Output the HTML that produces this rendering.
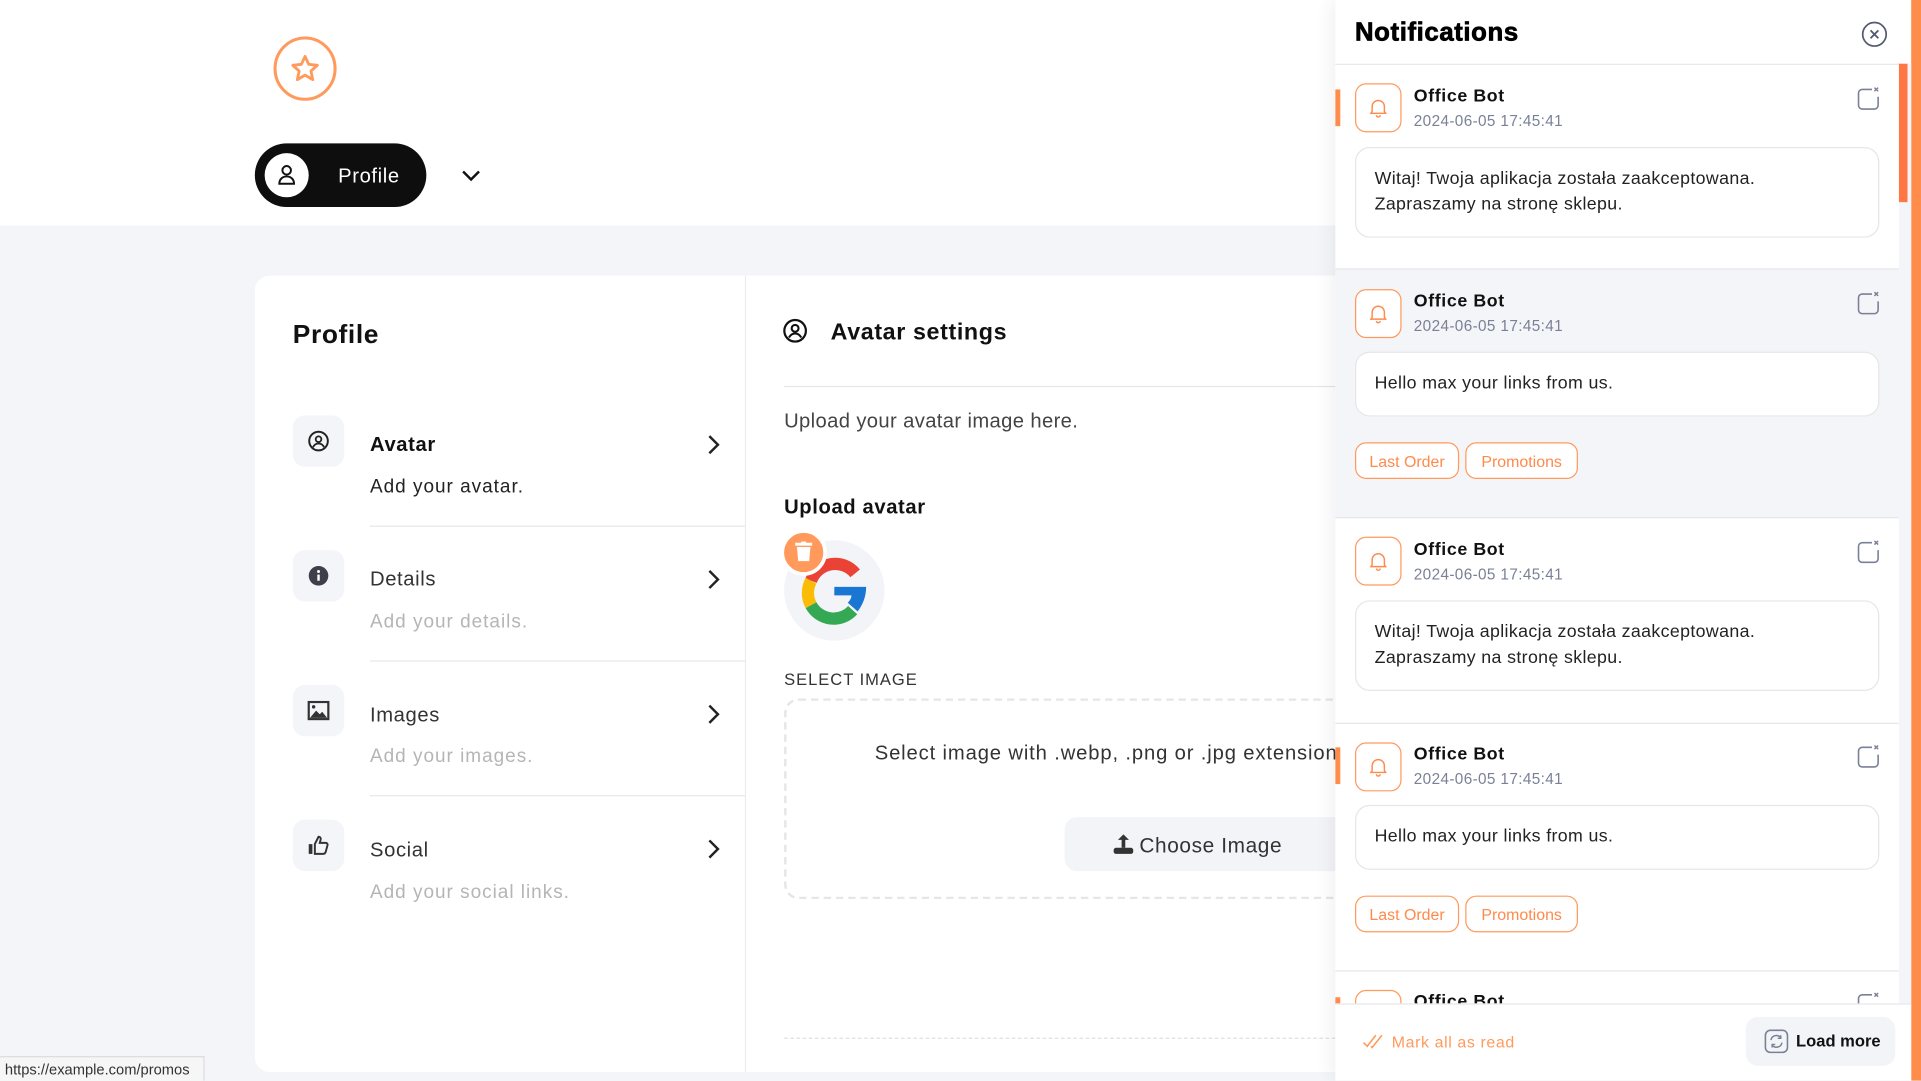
<!DOCTYPE html>
<html><head><meta charset="utf-8">
<style>
*{box-sizing:border-box;margin:0;padding:0}
html,body{width:1921px;height:1080px;overflow:hidden;background:#f4f5f8;font-family:"Liberation Sans",sans-serif}
#w{position:absolute;left:0;top:0;width:1568px;height:882px;transform:scale(1.22513);transform-origin:0 0;background:#f4f5f8}
.a{position:absolute}
.t{white-space:nowrap;line-height:1;letter-spacing:.5px}
.ib{position:absolute;width:42px;height:42px;border-radius:10px;background:#f4f5f8;display:flex;align-items:center;justify-content:center}
.it{font-size:16.5px;color:#333;left:302px}
.is{font-size:15.5px;color:#b5b5b5;left:302px;letter-spacing:.8px}
.dv{position:absolute;left:302px;width:306px;height:1px;background:#e8e8ea}
.chev{position:absolute;left:577px}
.bell{position:absolute;left:1106px;width:38px;height:40px;border:1px solid #ff9a5c;border-radius:9px;background:#fff;display:flex;align-items:center;justify-content:center}
.nm{left:1154px;font-size:14.5px;font-weight:bold;color:#111}
.dt{left:1154px;font-size:12.5px;color:#7a8196;letter-spacing:.3px}
.msg{position:absolute;left:1106px;width:428px;background:#fff;border:1px solid #e6e6ea;border-radius:12px;padding:0 15px;font-size:14.5px;color:#222;line-height:21px;display:flex;align-items:center;letter-spacing:.3px}
.tag{position:absolute;height:30px;border:1px solid #ff9a5c;border-radius:9px;color:#ff8a4c;font-size:13px;display:flex;align-items:center;justify-content:center;background:#fff}
.dis{position:absolute;left:1515px}
</style></head><body><div id="w">
<div class="a" style="left:0;top:0;width:1568px;height:184px;background:#fff"></div>
<svg class="a" style="left:222px;top:29px" width="54" height="54" viewBox="0 0 54 54"><ellipse cx="27" cy="27" rx="24.5" ry="25" fill="none" stroke="#ff9a5c" stroke-width="2.5"/><path d="M27 17l3 6.5 7 .8-5.2 4.7 1.5 7-6.3-3.7-6.3 3.7 1.5-7-5.2-4.7 7-.8z" fill="none" stroke="#ff9a5c" stroke-width="2.3" stroke-linejoin="round"/></svg>
<div class="a" style="left:208px;top:117px;width:140px;height:52px;border-radius:26px;background:#0e0e0e"></div>
<div class="a" style="left:216px;top:125px;width:36px;height:36px;border-radius:50%;background:#fff"></div>
<svg class="a" style="left:225px;top:133px" width="18" height="20" viewBox="0 0 18 20"><circle cx="9" cy="6" r="3.5" fill="none" stroke="#111" stroke-width="1.6"/><path d="M3 17c0-4 3-6 6-6s6 2 6 6z" fill="none" stroke="#111" stroke-width="1.6"/></svg>
<div class="a t" style="left:276px;top:136px;font-size:16.5px;color:#fff">Profile</div>
<svg class="a" style="left:376px;top:137px" width="17" height="12" viewBox="0 0 17 12"><path d="M2 3l6.5 6.5L15 3" fill="none" stroke="#111" stroke-width="2"/></svg>
<div class="a" style="left:208px;top:225px;width:1000px;height:650px;background:#fff;border-radius:12px"></div>
<div class="a" style="left:608px;top:225px;width:1px;height:650px;background:#ececef"></div>
<div class="a t" style="left:239px;top:263px;font-size:21.5px;font-weight:bold;color:#111">Profile</div>

<div class="ib" style="left:239px;top:339px"><svg width="18" height="18" viewBox="0 0 18 18"><circle cx="9" cy="9" r="7.6" fill="none" stroke="#222" stroke-width="1.6"/><circle cx="9" cy="7.5" r="2.3" fill="none" stroke="#222" stroke-width="1.5"/><path d="M4.5 14c1-2 2.5-3 4.5-3s3.5 1 4.5 3" fill="none" stroke="#222" stroke-width="1.5"/></svg></div>
<div class="a t it" style="top:355px;font-weight:bold;color:#111">Avatar</div>
<div class="a t is" style="top:390px;color:#222">Add your avatar.</div>
<div class="dv" style="top:429px"></div>
<div class="ib" style="left:239px;top:449px"><svg width="18" height="18" viewBox="0 0 18 18"><circle cx="9" cy="9" r="8" fill="#3d3f4a"/><rect x="8" y="8" width="2" height="5" fill="#fff"/><circle cx="9" cy="5.5" r="1.2" fill="#fff"/></svg></div>
<div class="a t it" style="top:465px">Details</div>
<div class="a t is" style="top:500px">Add your details.</div>
<div class="dv" style="top:539px"></div>
<div class="ib" style="left:239px;top:559px"><svg width="18" height="16" viewBox="0 0 18 16"><rect x="1" y="1" width="16" height="14" fill="none" stroke="#333" stroke-width="1.8"/><path d="M2 14l5-6 3 3 2-2 4 5z" fill="#333"/><circle cx="5" cy="5" r="1.4" fill="#333"/></svg></div>
<div class="a t it" style="top:576px">Images</div>
<div class="a t is" style="top:610px">Add your images.</div>
<div class="dv" style="top:649px"></div>
<div class="ib" style="left:239px;top:669px"><svg width="18" height="18" viewBox="0 0 18 18"><rect x="1" y="8" width="3" height="8" fill="#333"/><path d="M6 8l3-6c1.5 0 2 1 1.7 2.5L10 7h5c1 0 1.6 1 1.3 2l-1.5 5.5c-.3.8-1 1.5-2 1.5H6z" fill="none" stroke="#333" stroke-width="1.6"/></svg></div>
<div class="a t it" style="top:686px">Social</div>
<div class="a t is" style="top:721px">Add your social links.</div>
<svg class="chev" style="top:354px" width="12" height="18" viewBox="0 0 12 18"><path d="M2 2l7 7-7 7" fill="none" stroke="#222" stroke-width="2"/></svg>
<svg class="chev" style="top:464px" width="12" height="18" viewBox="0 0 12 18"><path d="M2 2l7 7-7 7" fill="none" stroke="#222" stroke-width="2"/></svg>
<svg class="chev" style="top:574px" width="12" height="18" viewBox="0 0 12 18"><path d="M2 2l7 7-7 7" fill="none" stroke="#222" stroke-width="2"/></svg>
<svg class="chev" style="top:684px" width="12" height="18" viewBox="0 0 12 18"><path d="M2 2l7 7-7 7" fill="none" stroke="#222" stroke-width="2"/></svg>

<svg class="a" style="left:639px;top:260px" width="20" height="20" viewBox="0 0 20 20"><circle cx="10" cy="10" r="8.8" fill="none" stroke="#111" stroke-width="1.8"/><circle cx="10" cy="8" r="2.8" fill="none" stroke="#111" stroke-width="1.7"/><path d="M5 15.5c1.2-2.2 3-3.3 5-3.3s3.8 1.1 5 3.3" fill="none" stroke="#111" stroke-width="1.7"/></svg>
<div class="a t" style="left:678px;top:262px;font-size:19px;font-weight:bold;color:#111">Avatar settings</div>
<div class="a" style="left:640px;top:315px;width:460px;height:1px;background:#e6e6e8"></div>
<div class="a t" style="left:640px;top:336px;font-size:16.5px;color:#444;letter-spacing:.3px">Upload your avatar image here.</div>
<div class="a t" style="left:640px;top:406px;font-size:16.5px;font-weight:bold;color:#111">Upload avatar</div>
<div class="a" style="left:640px;top:441px;width:82px;height:82px;border-radius:50%;background:#f3f4f8"></div>
<svg class="a" style="left:650px;top:452px" width="62" height="60" viewBox="0 0 62 60"><path d="M48 16A21 21 0 0 0 12 22" fill="none" stroke="#ea4335" stroke-width="10"/><path d="M12 22A21 21 0 0 0 12 42" fill="none" stroke="#fbbc05" stroke-width="10"/><path d="M12 42A21 21 0 0 0 46 46" fill="none" stroke="#34a853" stroke-width="10"/><path d="M31 27h26c0 8-3 15-7 20l-8-7c2-2 3-4 3-6H31z" fill="#1976d2"/></svg>
<div class="a" style="left:637px;top:432px;width:38px;height:38px;border-radius:50%;background:#ff9a5c;border:3px solid #fff"></div>
<svg class="a" style="left:649px;top:442px" width="14" height="17" viewBox="0 0 14 17"><rect x="0" y="1" width="14" height="2.4" fill="#fff"/><rect x="5" y="0" width="4" height="2" fill="#fff"/><path d="M1.5 4.5h11l-1 11.5h-9z" fill="#fff"/></svg>
<div class="a t" style="left:640px;top:548px;font-size:13.5px;color:#333;letter-spacing:.8px">SELECT IMAGE</div>
<div class="a" style="left:640px;top:570px;width:470px;height:164px;border:2px dashed #e6e6e8;border-radius:12px"></div>
<div class="a t" style="left:714px;top:607px;font-size:16.5px;color:#333;letter-spacing:.7px">Select image with .webp, .png or .jpg extension</div>
<div class="a" style="left:869px;top:667px;width:240px;height:44px;border-radius:10px;background:#f3f4f8"></div>
<svg class="a" style="left:908px;top:680px" width="18" height="18" viewBox="0 0 18 18"><path d="M9 1l-4.5 4.5h3V12h3V5.5h3z" fill="#333"/><rect x="1" y="12" width="16" height="5" rx="2" fill="#333"/></svg>
<div class="a t" style="left:930px;top:682px;font-size:17px;color:#333">Choose Image</div>
<div class="a" style="left:640px;top:847px;width:460px;border-top:1px dashed #e0e0e2"></div>
<div class="a t" style="left:0;top:862px;width:167px;height:20px;background:#f6f6f6;border:1px solid #ddd;border-left:none;border-bottom:none;font-size:12px;color:#333;padding:4px 0 0 4px;letter-spacing:0">https://example.com/promos</div>

<div class="a" style="left:1090px;top:0;width:470px;height:882px;background:#fff;box-shadow:-4px 0 14px rgba(0,0,0,.06)"></div>
<div class="a" style="left:1560px;top:0;width:8px;height:882px;background:#ff8c4a"></div>
<div class="a" style="left:1550px;top:52px;width:10px;height:767px;background:#f4f5f8"></div>
<div class="a" style="left:1549px;top:52px;width:8px;height:113px;background:#ff7745"></div>
<div class="a t" style="left:1106px;top:16px;font-size:21px;font-weight:900;color:#000;-webkit-text-stroke:.6px #000">Notifications</div>
<svg class="a" style="left:1519px;top:17px" width="22" height="22" viewBox="0 0 22 22"><circle cx="11" cy="11" r="9.6" fill="none" stroke="#555b6e" stroke-width="1.4"/><path d="M7.8 7.8l6.4 6.4M14.2 7.8l-6.4 6.4" stroke="#555b6e" stroke-width="1.5"/></svg>
<div class="a" style="left:1090px;top:52px;width:460px;height:1px;background:#e6e6ea"></div>

<div class="a" style="left:1090px;top:53px;width:460px;height:167px;background:#fff"></div>
<div class="a" style="left:1090px;top:73px;width:4px;height:30px;background:#ff8c4a"></div>
<div class="bell" style="top:68px"><svg width="14" height="16" viewBox="0 0 14 16"><path d="M2 11V7a5 5 0 0 1 10 0v4l1 1.5H1z" fill="none" stroke="#ff8a4c" stroke-width="1.2"/><path d="M5.5 14a1.5 1.5 0 0 0 3 0" fill="none" stroke="#ff8a4c" stroke-width="1.2"/></svg></div>
<div class="a t nm" style="top:72px">Office Bot</div>
<div class="a t dt" style="top:93px">2024-06-05 17:45:41</div>
<svg class="dis" style="top:70px" width="20" height="20" viewBox="0 0 20 20"><path d="M13 3H5a3 3 0 0 0-3 3v10a3 3 0 0 0 3 3h10a3 3 0 0 0 3-3V9" fill="none" stroke="#7a8196" stroke-width="1.3"/><path d="M15 1.5l3 3M18 1.5l-3 3" stroke="#7a8196" stroke-width="1.2"/></svg>
<div class="msg" style="top:120px;height:74px">Witaj! Twoja aplikacja została zaakceptowana.<br>Zapraszamy na stronę sklepu.</div>
<div class="a" style="left:1090px;top:219px;width:460px;height:1px;background:#e6e6ea"></div>
<div class="a" style="left:1090px;top:220px;width:460px;height:202px;background:#f4f5f8"></div>
<div class="bell" style="top:236px"><svg width="14" height="16" viewBox="0 0 14 16"><path d="M2 11V7a5 5 0 0 1 10 0v4l1 1.5H1z" fill="none" stroke="#ff8a4c" stroke-width="1.2"/><path d="M5.5 14a1.5 1.5 0 0 0 3 0" fill="none" stroke="#ff8a4c" stroke-width="1.2"/></svg></div>
<div class="a t nm" style="top:239px">Office Bot</div>
<div class="a t dt" style="top:260px">2024-06-05 17:45:41</div>
<svg class="dis" style="top:237px" width="20" height="20" viewBox="0 0 20 20"><path d="M13 3H5a3 3 0 0 0-3 3v10a3 3 0 0 0 3 3h10a3 3 0 0 0 3-3V9" fill="none" stroke="#7a8196" stroke-width="1.3"/><path d="M15 1.5l3 3M18 1.5l-3 3" stroke="#7a8196" stroke-width="1.2"/></svg>
<div class="msg" style="top:287px;height:53px">Hello max your links from us.</div>
<div class="tag" style="left:1106px;top:361px;width:85px">Last Order</div>
<div class="tag" style="left:1196px;top:361px;width:92px">Promotions</div>
<div class="a" style="left:1090px;top:422px;width:460px;height:1px;background:#e6e6ea"></div>
<div class="bell" style="top:438px"><svg width="14" height="16" viewBox="0 0 14 16"><path d="M2 11V7a5 5 0 0 1 10 0v4l1 1.5H1z" fill="none" stroke="#ff8a4c" stroke-width="1.2"/><path d="M5.5 14a1.5 1.5 0 0 0 3 0" fill="none" stroke="#ff8a4c" stroke-width="1.2"/></svg></div>
<div class="a t nm" style="top:442px">Office Bot</div>
<div class="a t dt" style="top:463px">2024-06-05 17:45:41</div>
<svg class="dis" style="top:440px" width="20" height="20" viewBox="0 0 20 20"><path d="M13 3H5a3 3 0 0 0-3 3v10a3 3 0 0 0 3 3h10a3 3 0 0 0 3-3V9" fill="none" stroke="#7a8196" stroke-width="1.3"/><path d="M15 1.5l3 3M18 1.5l-3 3" stroke="#7a8196" stroke-width="1.2"/></svg>
<div class="msg" style="top:490px;height:74px">Witaj! Twoja aplikacja została zaakceptowana.<br>Zapraszamy na stronę sklepu.</div>
<div class="a" style="left:1090px;top:590px;width:460px;height:1px;background:#e6e6ea"></div>
<div class="a" style="left:1090px;top:591px;width:460px;height:201px;background:#fff"></div>
<div class="a" style="left:1090px;top:610px;width:4px;height:30px;background:#ff8c4a"></div>
<div class="bell" style="top:606px"><svg width="14" height="16" viewBox="0 0 14 16"><path d="M2 11V7a5 5 0 0 1 10 0v4l1 1.5H1z" fill="none" stroke="#ff8a4c" stroke-width="1.2"/><path d="M5.5 14a1.5 1.5 0 0 0 3 0" fill="none" stroke="#ff8a4c" stroke-width="1.2"/></svg></div>
<div class="a t nm" style="top:609px">Office Bot</div>
<div class="a t dt" style="top:630px">2024-06-05 17:45:41</div>
<svg class="dis" style="top:607px" width="20" height="20" viewBox="0 0 20 20"><path d="M13 3H5a3 3 0 0 0-3 3v10a3 3 0 0 0 3 3h10a3 3 0 0 0 3-3V9" fill="none" stroke="#7a8196" stroke-width="1.3"/><path d="M15 1.5l3 3M18 1.5l-3 3" stroke="#7a8196" stroke-width="1.2"/></svg>
<div class="msg" style="top:657px;height:53px">Hello max your links from us.</div>
<div class="tag" style="left:1106px;top:731px;width:85px">Last Order</div>
<div class="tag" style="left:1196px;top:731px;width:92px">Promotions</div>
<div class="a" style="left:1090px;top:792px;width:460px;height:1px;background:#e6e6ea"></div>
<div class="a" style="left:1090px;top:814px;width:4px;height:6px;background:#ff8c4a"></div>
<div class="bell" style="top:808px"></div>
<div class="a t nm" style="top:811px">Office Bot</div>
<svg class="dis" style="top:809px" width="20" height="20" viewBox="0 0 20 20"><path d="M13 3H5a3 3 0 0 0-3 3v10" fill="none" stroke="#7a8196" stroke-width="1.3"/><path d="M15 1.5l3 3M18 1.5l-3 3" stroke="#7a8196" stroke-width="1.2"/></svg>
<div class="a" style="left:1090px;top:819px;width:470px;height:63px;background:#fff;border-top:1px solid #e6e6ea"></div>
<svg class="a" style="left:1112px;top:843px" width="18" height="14" viewBox="0 0 18 14"><path d="M1 8l3 3 7-9M7 11l1 1 8-10" fill="none" stroke="#ff9a5c" stroke-width="1.3"/></svg>
<div class="a t" style="left:1136px;top:844px;font-size:13px;color:#ff9a5c">Mark all as read</div>
<div class="a" style="left:1425px;top:830px;width:122px;height:40px;border-radius:10px;background:#f3f4f8"></div>
<svg class="a" style="left:1440px;top:840px" width="20" height="20" viewBox="0 0 20 20"><rect x="1" y="1" width="18" height="18" rx="4" fill="none" stroke="#7a8196" stroke-width="1.3"/><path d="M5.5 9a4.5 4.5 0 0 1 8-2M14.5 11a4.5 4.5 0 0 1-8 2" fill="none" stroke="#7a8196" stroke-width="1.2"/><path d="M13.5 5v2.5H11M6.5 15v-2.5H9" fill="none" stroke="#7a8196" stroke-width="1.2"/></svg>
<div class="a t" style="left:1466px;top:843px;font-size:13.5px;font-weight:bold;color:#111;letter-spacing:0">Load more</div>
</div></body></html>
